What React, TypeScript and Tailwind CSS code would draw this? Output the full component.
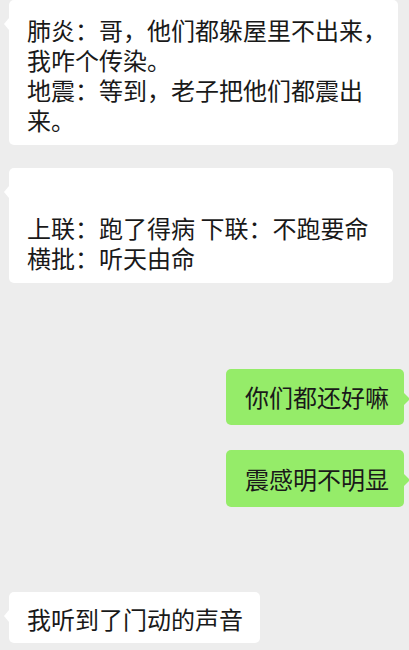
import React from 'react';

type Msg = { id: number; mine: boolean; lines: string[]; cls: string };

const messages: Msg[] = [
  {
    id: 1,
    mine: false,
    lines: ['肺炎：哥，他们都躲屋里不出来，', '我咋个传染。', '地震：等到，老子把他们都震出', '来。'],
    cls: 'w-[389px] pt-[15px] pb-[10px] pl-[18px]',
  },
  {
    id: 2,
    mine: false,
    lines: ['\u00a0', '上联：跑了得病 下联：不跑要命', '横批：听天由命'],
    cls: 'mt-[23px] w-[384px] pt-[15px] pb-[10px] pl-[18px]',
  },
  {
    id: 3,
    mine: true,
    lines: ['你们都还好嘛'],
    cls: 'mt-[86px] w-[178px] pt-[13px] pb-[13px] pl-[19px]',
  },
  {
    id: 4,
    mine: true,
    lines: ['震感明不明显'],
    cls: 'mt-[25px] w-[178px] pt-[14px] pb-[13px] pl-[19px]',
  },
  {
    id: 5,
    mine: false,
    lines: ['我听到了门动的声音'],
    cls: 'mt-[85px] w-[251px] pt-[12px] pb-[9px] pl-[18px]',
  },
];

const Bubble: React.FC<{ msg: Msg }> = ({ msg }) => (
  <div
    className={`relative rounded-[5px] text-[24px] leading-[30px] text-[#191919] ${
      msg.mine ? 'self-end mr-[5px] bg-[#95ec69]' : 'self-start ml-[9px] bg-white'
    } ${msg.cls}`}
  >
    {msg.mine ? (
      <span className="absolute right-[-6px] top-[24px] h-0 w-0 border-y-[6px] border-l-[6px] border-y-transparent border-l-[#95ec69]" />
    ) : (
      <span className="absolute left-[-5px] top-[18px] h-0 w-0 border-y-[6px] border-r-[5px] border-y-transparent border-r-white" />
    )}
    {msg.lines.map((line, i) => (
      <div key={i} className="whitespace-pre">
        {line}
      </div>
    ))}
  </div>
);

export default function App() {
  return (
    <div
      className="flex h-[650px] w-[409px] flex-col overflow-hidden bg-[#ededed]"
      style={{ fontFamily: '"Noto Sans CJK SC", "Noto Sans", sans-serif' }}
    >
      {messages.map(m => (
        <Bubble key={m.id} msg={m} />
      ))}
    </div>
  );
}
